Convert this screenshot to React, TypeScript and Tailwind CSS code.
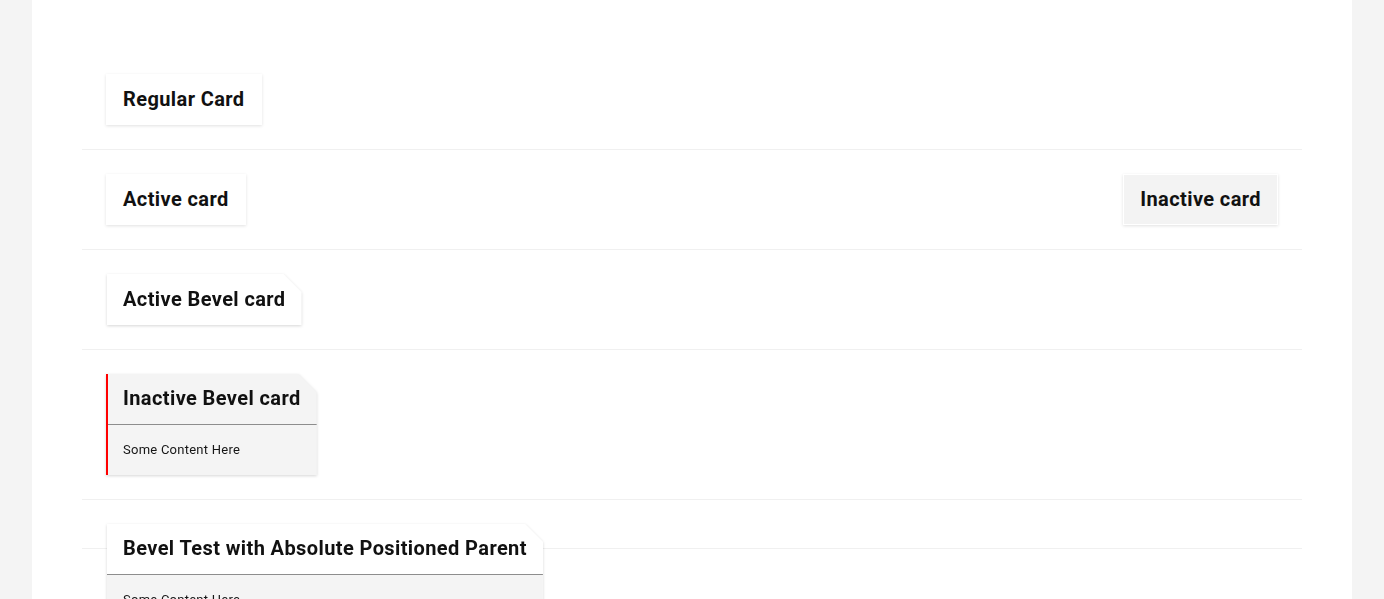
import React from "react";

const font = { fontFamily: "Roboto, 'Liberation Sans', sans-serif" };

function Card({ title, inactive = false }: { title: string; inactive?: boolean }) {
  return (
    <div
      className={`h-[51px] flex items-center px-[16px] pb-[2px] border border-white shadow-[0_1px_3px_rgba(0,0,0,0.12)] ${
        inactive ? "bg-[#f3f3f3]" : "bg-white"
      }`}
    >
      <span className="text-[20px] font-bold tracking-[0.4px] text-[#111] leading-none">{title}</span>
    </div>
  );
}

function BevelCard({
  title,
  inactive = false,
  content = false,
  whiteHeader = false,
}: {
  title: string;
  inactive?: boolean;
  content?: boolean;
  whiteHeader?: boolean;
}) {
  return (
    <div className="inline-block [filter:drop-shadow(0_1px_1.5px_rgba(0,0,0,0.16))]">
      <div
        className={`[clip-path:polygon(0_0,calc(100%-18px)_0,100%_18px,100%_100%,0_100%)] ${
          inactive ? "bg-[#f4f4f4] border-l-2 border-[#f00]" : "bg-white ml-px"
        }`}
      >
        <div
          className={`flex items-center pr-[16px] pb-[2px] ${inactive ? "pl-[15px]" : "pl-[16px]"} ${
            whiteHeader ? "bg-white" : ""
          } ${content ? "h-[51px] border-b border-[#8d8d8d]" : "h-[51px]"}`}
        >
          <span className="text-[20px] font-bold tracking-[0.4px] text-[#111] leading-none">{title}</span>
        </div>
        {content && (
          <div className={`h-[50px] flex items-center bg-[#f4f4f4] ${inactive ? "pl-[15px]" : "pl-[16px]"}`}>
            <span className="text-[13px] tracking-[0.25px] text-[#161616]">Some Content Here</span>
          </div>
        )}
      </div>
    </div>
  );
}

export default function App() {
  return (
    <div className="min-h-[599px] bg-[#f4f4f4] overflow-hidden" style={font}>
      <div className="ml-[32px] w-[1320px] min-h-[599px] bg-white pt-[50px] px-[50px]">
        <div className="flex flex-col">
          <div className="flex px-[24px] py-[24px] border-b border-[#f0f0f0]">
            <Card title="Regular Card" />
          </div>
          <div className="flex justify-between px-[24px] py-[24px] border-b border-[#f0f0f0]">
            <Card title="Active card" />
            <Card title="Inactive card" inactive />
          </div>
          <div className="flex px-[24px] py-[24px] border-b border-[#f0f0f0]">
            <BevelCard title="Active Bevel card" />
          </div>
          <div className="flex px-[24px] py-[24px] border-b border-[#f0f0f0]">
            <BevelCard title="Inactive Bevel card" inactive content />
          </div>
          <div className="relative px-[24px] py-[24px] border-b border-[#f0f0f0]">
            <div className="relative h-0">
              <div className="absolute left-0 top-0 z-10">
                <BevelCard title="Bevel Test with Absolute Positioned Parent" content whiteHeader />
              </div>
            </div>
          </div>
        </div>
      </div>
    </div>
  );
}
